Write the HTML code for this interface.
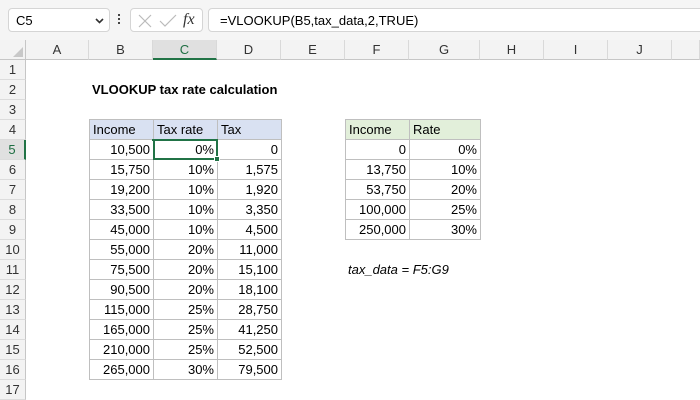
<!DOCTYPE html>
<html><head><style>
*{margin:0;padding:0;box-sizing:border-box}
body{width:700px;height:400px;overflow:hidden;background:#fff;font-family:"Liberation Sans",sans-serif;font-size:13px;color:#000;position:relative}
.a{position:absolute}
.top{left:0;top:0;width:700px;height:40px;background:#f5f5f5}
.box{background:#fff;border:1px solid #d5d5d5;border-radius:4px;height:24px;top:8px}
.ch{top:40px;height:20px;background:#f3f3f3;border-right:1px solid #d9d9d9;border-bottom:1px solid #c6c6c6;text-align:center;line-height:19px;color:#333;font-size:13px}
.rh{left:0;width:26px;height:20px;background:#f3f3f3;border-right:1px solid #c6c6c6;border-bottom:1px solid #dcdcdc;text-align:center;line-height:20px;color:#333;font-size:13px}
table{position:absolute;border-collapse:collapse;table-layout:fixed}
td{border:1px solid #bfbfbf;height:20px;padding:0 3px;text-align:right;line-height:18px;white-space:nowrap}
tr.h td{text-align:left}
</style></head><body>
<div class="a top"></div>
<div class="a box" style="left:8px;width:102px"><span class="a" style="left:7px;top:4px">C5</span><svg class="a" style="left:86px;top:9px" width="9" height="6"><path d="M1 1l3.5 3.5L8 1" stroke="#333" stroke-width="1.6" fill="none"/></svg></div>
<div class="a" style="left:118px;top:14px;width:2px;height:2px;background:#444;box-shadow:0 4px #444,0 8px #444"></div>
<div class="a box" style="left:130px;width:73px"><svg class="a" style="left:6px;top:5px" width="16" height="14"><path d="M2 1l12 12M14 1L2 13" stroke="#bbb" stroke-width="1.2"/></svg><svg class="a" style="left:28px;top:5px" width="18" height="14"><path d="M1 7l5 5L17 1" stroke="#bbb" stroke-width="1.2" fill="none"/></svg><span class="a" style="left:52px;top:2px;font-family:'Liberation Serif',serif;font-style:italic;font-size:16px;color:#333">fx</span></div>
<div class="a box" style="left:208px;width:500px"><span class="a" style="left:11px;top:4px">=VLOOKUP(B5,tax_data,2,TRUE)</span></div>
<div class="a" style="left:0;top:40px;width:26px;height:20px;background:#f3f3f3;border-right:1px solid #c6c6c6;border-bottom:1px solid #c6c6c6"><svg class="a" style="left:12px;top:6px" width="12" height="12"><path d="M11 1V11H1Z" fill="#c8c8c8"/></svg></div>
<div class="a ch" style="left:26px;width:63px">A</div>
<div class="a ch" style="left:89px;width:64px">B</div>
<div class="a ch" style="left:153px;width:64px;background:#e0e0e0;color:#1e6e42;border-bottom:2px solid #217346">C</div>
<div class="a ch" style="left:217px;width:64px">D</div>
<div class="a ch" style="left:281px;width:64px">E</div>
<div class="a ch" style="left:345px;width:64px">F</div>
<div class="a ch" style="left:409px;width:71px">G</div>
<div class="a ch" style="left:480px;width:64px">H</div>
<div class="a ch" style="left:544px;width:64px">I</div>
<div class="a ch" style="left:608px;width:64px">J</div>
<div class="a ch" style="left:672px;width:28px"></div>
<div class="a rh" style="top:60px">1</div><div class="a rh" style="top:80px">2</div><div class="a rh" style="top:100px">3</div><div class="a rh" style="top:120px">4</div>
<div class="a rh" style="top:140px;background:#e0e0e0;color:#1e6e42;border-right:2px solid #217346">5</div>
<div class="a rh" style="top:160px">6</div><div class="a rh" style="top:180px">7</div><div class="a rh" style="top:200px">8</div><div class="a rh" style="top:220px">9</div><div class="a rh" style="top:240px">10</div><div class="a rh" style="top:260px">11</div><div class="a rh" style="top:280px">12</div><div class="a rh" style="top:300px">13</div><div class="a rh" style="top:320px">14</div><div class="a rh" style="top:340px">15</div><div class="a rh" style="top:360px">16</div><div class="a rh" style="top:380px">17</div>
<div class="a" style="left:92px;top:82px;font-weight:bold">VLOOKUP tax rate calculation</div>
<table style="left:89px;top:119px;width:193px">
<colgroup><col style="width:64px"><col style="width:64px"><col style="width:64px"></colgroup>
<tr class="h" style="background:#d9e1f2"><td>Income</td><td>Tax rate</td><td>Tax</td></tr>
<tr><td>10,500</td><td>0%</td><td>0</td></tr>
<tr><td>15,750</td><td>10%</td><td>1,575</td></tr>
<tr><td>19,200</td><td>10%</td><td>1,920</td></tr>
<tr><td>33,500</td><td>10%</td><td>3,350</td></tr>
<tr><td>45,000</td><td>10%</td><td>4,500</td></tr>
<tr><td>55,000</td><td>20%</td><td>11,000</td></tr>
<tr><td>75,500</td><td>20%</td><td>15,100</td></tr>
<tr><td>90,500</td><td>20%</td><td>18,100</td></tr>
<tr><td>115,000</td><td>25%</td><td>28,750</td></tr>
<tr><td>165,000</td><td>25%</td><td>41,250</td></tr>
<tr><td>210,000</td><td>25%</td><td>52,500</td></tr>
<tr><td>265,000</td><td>30%</td><td>79,500</td></tr>
</table>
<div class="a" style="left:153px;top:139px;width:65px;height:21px;border:2px solid #217346"></div>
<div class="a" style="left:214px;top:156px;width:6px;height:6px;background:#217346;border:1px solid #fff"></div>
<div class="a" style="left:152px;top:139px;width:65px;height:2px;background:#217346"></div>
<table style="left:345px;top:119px;width:136px">
<colgroup><col style="width:64px"><col style="width:71px"></colgroup>
<tr class="h" style="background:#e2efda"><td>Income</td><td>Rate</td></tr>
<tr><td>0</td><td>0%</td></tr>
<tr><td>13,750</td><td>10%</td></tr>
<tr><td>53,750</td><td>20%</td></tr>
<tr><td>100,000</td><td>25%</td></tr>
<tr><td>250,000</td><td>30%</td></tr>
</table>
<div class="a" style="left:348px;top:262px;font-style:italic">tax_data = F5:G9</div>
</body></html>
